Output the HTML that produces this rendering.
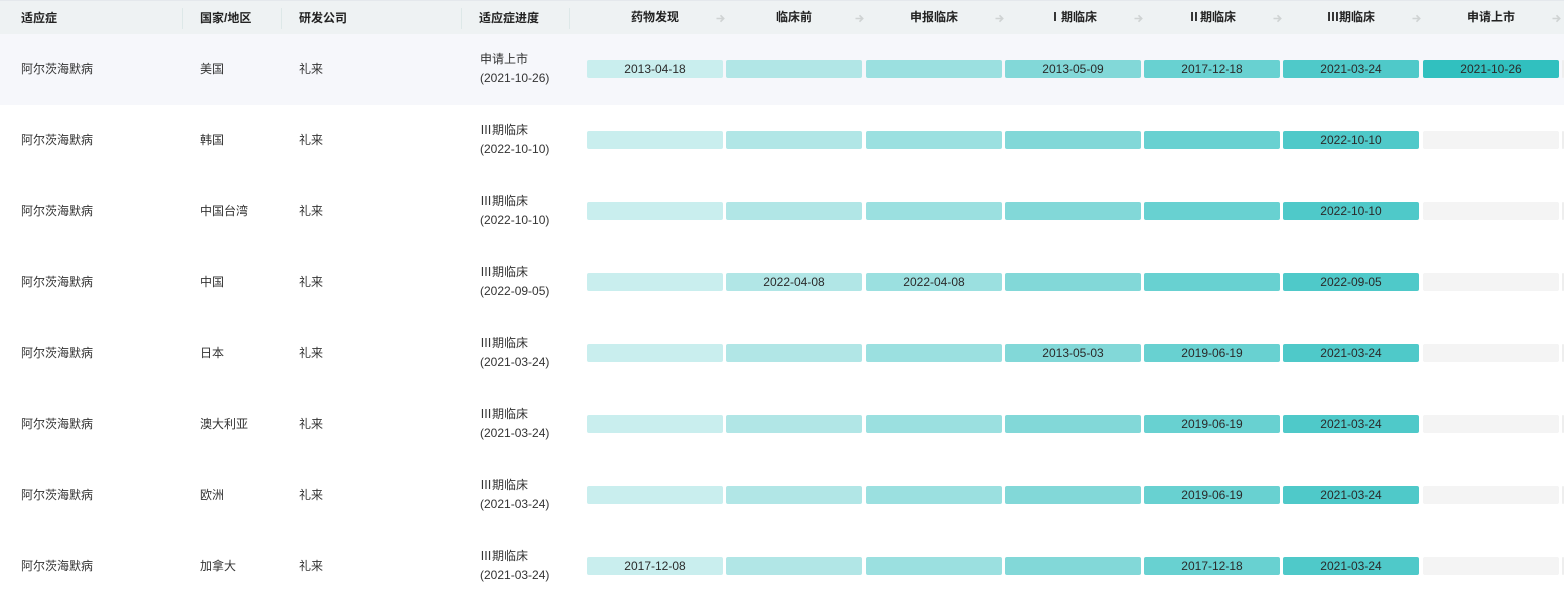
<!DOCTYPE html>
<html><head><meta charset="utf-8"><style>
body{margin:0;width:1564px;height:584px;overflow:hidden;background:#fff;font-family:"Liberation Sans","Noto Sans CJK SC",sans-serif;font-size:12px;color:#333;position:relative}
.hd{position:absolute;left:0;top:0;width:1564px;height:34px;background:#eef2f3;border-top:1px solid #e4e8ec;box-sizing:border-box}
.h{position:absolute;top:8px;font-weight:bold;font-size:12px;color:#222}
.dv{position:absolute;top:7px;width:1px;height:21px;background:#dde8e8}
.ar{position:absolute;top:12px;width:9px;height:9px}
.row{position:absolute;left:0;width:1564px;height:71px}
.t{position:absolute;font-size:12px;color:#333}
.b{position:absolute;height:18px;border-radius:2px;text-align:center;line-height:18px;font-size:12px;color:#2a2a2a}
</style></head><body>
<div style="position:absolute;left:0;top:0;width:2px;height:584px;background:#eef0f2"></div>
<div class="hd">
<span class="h" style="left:21px">适应症</span>
<span class="dv" style="left:182px"></span>
<span class="h" style="left:200px">国家/地区</span>
<span class="dv" style="left:281px"></span>
<span class="h" style="left:299px">研发公司</span>
<span class="dv" style="left:461px"></span>
<span class="h" style="left:479px">适应症进度</span>
<span class="dv" style="left:569px"></span>
</div>
<div id="c"></div>
<script>
var L=[587,726,866,1005,1144,1283,1423],W=136;
var C=['#c9eeee','#b1e6e6','#9be0e0','#82d8d8','#68d1d1','#4fc9c9','#31c0bf'];
var heads=['药物发现','临床前','申报临床','Ⅰ期临床','Ⅱ期临床','Ⅲ期临床','申请上市'];
var h='';
var arr='<svg viewBox="0 0 9 9"><path d="M0.5 4.5H7.5M4.5 1.3L7.7 4.5L4.5 7.7" fill="none" stroke="#cfd3d3" stroke-width="1.6"/></svg>';
for(var i=0;i<7;i++){h+='<span class="h" style="left:'+L[i]+'px;width:'+W+'px;text-align:center;position:absolute">'+heads[i]+'</span><span class="ar" style="left:'+(L[i]+129)+'px">'+arr+'</span>';}
var R=[['美国','申请上市','2021-10-26',['2013-04-18','','','2013-05-09','2017-12-18','2021-03-24','2021-10-26']],
['韩国','Ⅲ期临床','2022-10-10',['','','','','','2022-10-10',null]],
['中国台湾','Ⅲ期临床','2022-10-10',['','','','','','2022-10-10',null]],
['中国','Ⅲ期临床','2022-09-05',['','2022-04-08','2022-04-08','','','2022-09-05',null]],
['日本','Ⅲ期临床','2021-03-24',['','','','2013-05-03','2019-06-19','2021-03-24',null]],
['澳大利亚','Ⅲ期临床','2021-03-24',['','','','','2019-06-19','2021-03-24',null]],
['欧洲','Ⅲ期临床','2021-03-24',['','','','','2019-06-19','2021-03-24',null]],
['加拿大','Ⅲ期临床','2021-03-24',['2017-12-08','','','','2017-12-18','2021-03-24',null]]];
for(var r=0;r<R.length;r++){var y=34+71*r;var d=R[r];
h+='<div class="row" style="top:'+y+'px;background:'+(r==0?'#f6f7fb':'#fff')+'"></div>';
h+='<span class="t" style="left:21px;top:'+(y+26)+'px">阿尔茨海默病</span>';
h+='<span class="t" style="left:200px;top:'+(y+26)+'px">'+d[0]+'</span>';
h+='<span class="t" style="left:299px;top:'+(y+26)+'px">礼来</span>';
h+='<span class="t" style="left:480px;top:'+(y+16)+'px">'+d[1]+'</span>';
h+='<span class="t" style="left:480px;top:'+(y+37)+'px">('+d[2]+')</span>';
for(var i=0;i<7;i++){var v=d[3][i];h+='<div class="b" style="left:'+L[i]+'px;width:'+W+'px;top:'+(y+26)+'px;background:'+(v===null?'#f4f4f4':C[i])+'">'+(v||'')+'</div>';}
h+='<div class="b" style="left:1562px;width:2px;top:'+(y+26)+'px;background:#eeeeee"></div>';
}
document.getElementById('c').innerHTML=h;
</script>
</body></html>
